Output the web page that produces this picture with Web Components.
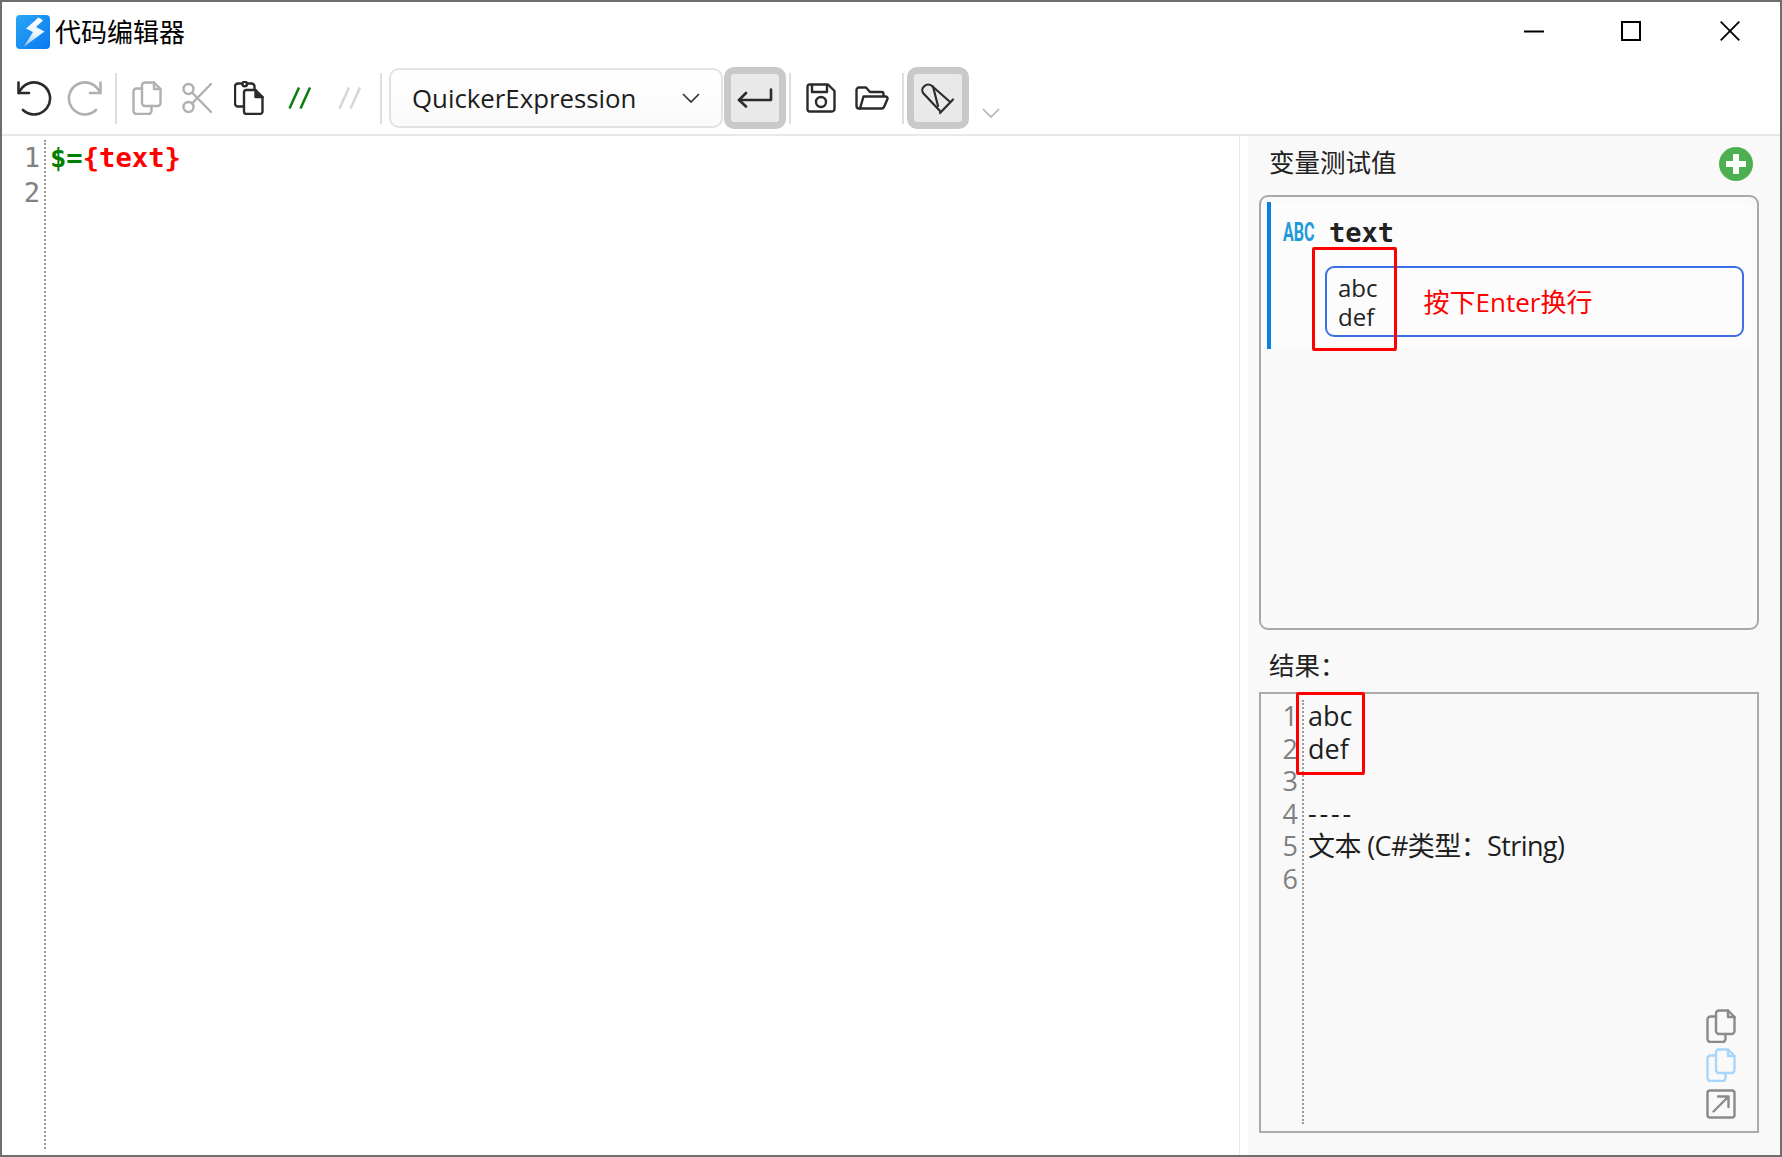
<!DOCTYPE html>
<html lang="zh">
<head>
<meta charset="utf-8">
<title>代码编辑器</title>
<style>
  html, body { margin: 0; padding: 0; background: #fff; }
  body { font-family: "Open Sans", "Noto Sans CJK SC", sans-serif; }
</style>
</head>
<body>
<app-window>
  <title-bar slot="title">代码编辑器</title-bar>
  <tool-bar slot="tools"></tool-bar>
  <code-editor slot="editor"></code-editor>
  <var-panel slot="panel"></var-panel>
</app-window>

<script>
const UI_FONT = '"Open Sans", "Noto Sans CJK SC", sans-serif';
const MONO_FONT = '"DejaVu Sans Mono", "Noto Sans CJK SC", monospace';

const copyIcon = (color) => `
  <svg width="30" height="34" viewBox="0 0 30 34" fill="none" stroke="${color}" stroke-width="2.4" stroke-linejoin="round" stroke-linecap="round">
    <path d="M13 1.5h9l6.5 6.5v14a3 3 0 0 1-3 3h-12.500a3 3 0 0 1-3-3v-17.500a3 3 0 0 1 3-3z"/>
    <path d="M22 1.500v6.500h6.500"/>
    <path d="M10 7.500h-5.500a3 3 0 0 0-3 3v19.500a3 3 0 0 0 3 3h12a3 3 0 0 0 3-3v-5"/>
  </svg>`;

const ICONS = {
  undo: (c) => `<svg width="36" height="36" viewBox="0 0 36 36" fill="none" stroke="${c}" stroke-width="2.600" stroke-linecap="round" stroke-linejoin="round">
    <path d="M2.500 2.500v10.500h10.500"/><path d="M3 13A16 16 0 1 1 7 30"/></svg>`,
  redo: (c) => `<svg width="36" height="36" viewBox="0 0 36 36" fill="none" stroke="${c}" stroke-width="2.600" stroke-linecap="round" stroke-linejoin="round">
    <path d="M33.500 2.500v10.500h-10.500"/><path d="M33 13A16 16 0 1 0 29 30"/></svg>`,
  scissors: (c) => `<svg width="30" height="32" viewBox="0 0 30 32" fill="none" stroke="${c}" stroke-width="2.400" stroke-linecap="round">
    <circle cx="6.500" cy="7" r="5"/><circle cx="6.500" cy="25" r="5"/>
    <path d="M10 10.500L29 30M10 21.500L29 2"/></svg>`,
  paste: (c) => `<svg width="30" height="34" viewBox="0 0 30 34" fill="none" stroke="${c}" stroke-width="2.400" stroke-linecap="round" stroke-linejoin="round">
    <path d="M9 25.500h-5a3 3 0 0 1-3-3v-17a3 3 0 0 1 3-3h3.500M14 2.500h3.500a3 3 0 0 1 3 3v2"/>
    <circle cx="10.700" cy="3" r="2.300"/>
    <path d="M12.500 9h9l7 7v14.500a2.500 2.500 0 0 1-2.500 2.500h-13.500a2.500 2.500 0 0 1-2.500-2.500v-19a2.500 2.500 0 0 1 2.500-2.500z"/>
    <path d="M21.500 9v7h7" fill="${c}"/></svg>`,
  slashes: (c) => `<svg width="24" height="24" viewBox="0 0 24 24" fill="none" stroke="${c}" stroke-width="2.500">
    <path d="M1.500 22.500L11 1.500M12.500 22.500L22 1.500"/></svg>`,
  enter: (c) => `<svg width="36" height="20" viewBox="0 0 36 20" fill="none" stroke="${c}" stroke-width="2.600" stroke-linecap="round" stroke-linejoin="round">
    <path d="M34 1.500v10.500h-32"/><path d="M9 5l-7 7 7 6.500"/></svg>`,
  save: (c) => `<svg width="30" height="30" viewBox="0 0 30 30" fill="none" stroke="${c}" stroke-width="2.400" stroke-linejoin="round">
    <path d="M3.500 1.500h18.500l6.500 6.500v18a2.500 2.500 0 0 1-2.500 2.500h-22.500a2 2 0 0 1-2-2v-23a2 2 0 0 1 2-2z"/>
    <path d="M6 1.500v7.500h15v-7.500"/><circle cx="15" cy="19" r="5"/></svg>`,
  open: (c) => `<svg width="34" height="24" viewBox="0 0 34 24" fill="none" stroke="${c}" stroke-width="2.400" stroke-linejoin="round" stroke-linecap="round">
    <path d="M5 22.500h-1a2.500 2.500 0 0 1-2.500-2.500v-16a2.500 2.500 0 0 1 2.500-2.500h7l4 4.500h11.500a2 2 0 0 1 2 2v2"/>
    <path d="M8.500 10.500h22a2 2 0 0 1 2 2.500l-3.500 8a2.500 2.500 0 0 1-2.300 1.500h-21.700z"/></svg>`,
  marker: (c) => `<svg width="34" height="34" viewBox="0 0 34 34" fill="none" stroke="${c}" stroke-width="2.200" stroke-linejoin="round" stroke-linecap="round">
    <path d="M19 30L2.500 12.500a5 5 0 0 1 .5-7 5.500 5.500 0 0 1 8-.5L28 20"/>
    <path d="M12 5.500l5 19.500M32 18.500L19 32"/></svg>`,
  chevron: (c) => `<svg width="18" height="10" viewBox="0 0 18 10" fill="none" stroke="${c}" stroke-width="1.700"><path d="M1 1l8 8 8-8"/></svg>`,
  external: (c) => `<svg width="30" height="30" viewBox="0 0 30 30" fill="none" stroke="${c}" stroke-width="2.400" stroke-linecap="round" stroke-linejoin="round">
    <rect x="1.500" y="1.500" width="27" height="27" rx="2.500"/><path d="M7.500 22.500L22 8M12 7.500h10.500v10.500"/></svg>`
};

class AppWindow extends HTMLElement {
  constructor() {
    super();
    this.attachShadow({ mode: "open" }).innerHTML = `
      <style>
        :host {
          display: flex;
          flex-direction: column;
          box-sizing: border-box;
          width: 1782px;
          height: 1157px;
          border: 2px solid #6e6e6e;
          background: #fff;
          overflow: hidden;
        }
        .main { flex: 1; display: flex; min-height: 0; }
      </style>
      <slot name="title"></slot>
      <slot name="tools"></slot>
      <div class="main">
        <slot name="editor"></slot>
        <slot name="panel"></slot>
      </div>
    `;
  }
}
customElements.define("app-window", AppWindow);

class TitleBar extends HTMLElement {
  constructor() {
    super();
    this.attachShadow({ mode: "open" }).innerHTML = `
      <style>
        :host {
          display: flex;
          align-items: center;
          height: 58px;
          padding-left: 14px;
          font: 26px ${UI_FONT};
          color: #000;
        }
        .logo { width: 34px; height: 34px; margin-right: 5px; margin-top: 1px; }
        .title { flex: 1; line-height: 34px; margin-top: 2px; }
        .caption { display: flex; align-items: center; }
        .caption span { display: flex; justify-content: center; align-items: center; }
      </style>
      <svg class="logo" viewBox="0 0 34 34">
        <defs>
          <linearGradient id="lg" x1="0" y1="0" x2="1" y2="1">
            <stop offset="0" stop-color="#2aa6f5"/><stop offset="1" stop-color="#0a78f0"/>
          </linearGradient>
          <linearGradient id="bolt" x1="0.600" y1="0" x2="0.300" y2="1">
            <stop offset="0" stop-color="#fff"/><stop offset=".55" stop-color="#e8f5fe"/><stop offset="1" stop-color="#8fcbf8"/>
          </linearGradient>
        </defs>
        <rect width="34" height="34" rx="4" fill="url(#lg)"/>
        <path d="M20.500 2Q22 2 21.500 3.500L10 13.500l7 3.500L7.500 32l21-15.500-8.500-4.500 7-6.500Q25 3 20.500 2z" fill="url(#bolt)"/>
      </svg>
      <div class="title"><slot></slot></div>
      <div class="caption">
        <span style="width:20px;height:20px;margin-right:77px">
          <svg width="20" height="20" viewBox="0 0 20 20"><path d="M0 10.500h20" stroke="#000" stroke-width="2"/></svg>
        </span>
        <span style="width:20px;height:20px;margin-right:79px">
          <svg width="20" height="20" viewBox="0 0 20 20"><rect x="1" y="1" width="18" height="18" fill="none" stroke="#000" stroke-width="2"/></svg>
        </span>
        <span style="width:20px;height:20px;margin-right:40px">
          <svg width="20" height="20" viewBox="0 0 20 20"><path d="M.7.700l18.600 18.600M19.300.700L.7 19.300" stroke="#000" stroke-width="1.800"/></svg>
        </span>
      </div>
    `;
  }
}
customElements.define("title-bar", TitleBar);

class ToolBtn extends HTMLElement {
  connectedCallback() {
    if (this.shadowRoot) return;
    const icon = this.getAttribute("icon");
    const color = this.getAttribute("color") || "#2b2b2b";
    const art = icon === "copy" ? copyIcon(color) : ICONS[icon](color);
    this.attachShadow({ mode: "open" }).innerHTML = `
      <style>
        :host { display: flex; align-items: center; justify-content: center; flex: none; }
        svg { display: block; }
      </style>
      ${art}
    `;
  }
}
customElements.define("tool-btn", ToolBtn);

class ToolSep extends HTMLElement {
  constructor() {
    super();
    this.attachShadow({ mode: "open" }).innerHTML = `
      <style>
        :host { display: block; flex: none; width: 2px; height: 51px; background: #dedede; }
      </style>
    `;
  }
}
customElements.define("tool-sep", ToolSep);

class ToggleBtn extends HTMLElement {
  constructor() {
    super();
    this.attachShadow({ mode: "open" }).innerHTML = `
      <style>
        :host {
          display: flex;
          align-items: center;
          justify-content: center;
          flex: none;
          box-sizing: border-box;
          width: 62px;
          height: 62px;
          border: 7px solid #c9c9c9;
          border-radius: 10px;
          background: #e9e9e9;
        }
      </style>
      <slot></slot>
    `;
  }
}
customElements.define("toggle-btn", ToggleBtn);

class ComboBox extends HTMLElement {
  constructor() {
    super();
    this.attachShadow({ mode: "open" }).innerHTML = `
      <style>
        :host {
          display: flex;
          align-items: center;
          flex: none;
          box-sizing: border-box;
          width: 334px;
          height: 60px;
          padding: 0 21px 0 21px;
          border: 2px solid #e2e2e2;
          border-radius: 10px;
          background: linear-gradient(#fff, #fafafa);
          font: 25.800px ${UI_FONT};
          color: #1c1c1c;
        }
        .value { flex: 1; }
      </style>
      <div class="value"><slot></slot></div>
      ${ICONS.chevron("#333")}
    `;
  }
}
customElements.define("combo-box", ComboBox);

class ToolBar extends HTMLElement {
  constructor() {
    super();
    this.attachShadow({ mode: "open" }).innerHTML = `
      <style>
        :host {
          display: flex;
          align-items: center;
          box-sizing: border-box;
          height: 76px;
          padding: 2px 0 0 14px;
          border-bottom: 2px solid #e8e8e8;
        }
        .low { align-self: flex-end; margin-bottom: 16px; }
      </style>
      <tool-btn icon="undo"></tool-btn>
      <tool-btn icon="redo" color="#b0b0b0" style="margin-left:15px"></tool-btn>
      <tool-sep style="margin-left:12px"></tool-sep>
      <tool-btn icon="copy" color="#b0b0b0" style="margin-left:15px"></tool-btn>
      <tool-btn icon="scissors" color="#b0b0b0" style="margin-left:20px"></tool-btn>
      <tool-btn icon="paste" style="margin-left:22px"></tool-btn>
      <tool-btn icon="slashes" color="#0a7d0a" style="margin-left:24px"></tool-btn>
      <tool-btn icon="slashes" color="#d6d6d6" style="margin-left:26px"></tool-btn>
      <tool-sep style="margin-left:18px"></tool-sep>
      <combo-box style="margin-left:7px">QuickerExpression</combo-box>
      <toggle-btn style="margin-left:1px"><tool-btn icon="enter"></tool-btn></toggle-btn>
      <tool-sep style="margin-left:3px"></tool-sep>
      <tool-btn icon="save" style="margin-left:15px"></tool-btn>
      <tool-btn icon="open" style="margin-left:19px"></tool-btn>
      <tool-sep style="margin-left:13px"></tool-sep>
      <toggle-btn style="margin-left:3px"><tool-btn icon="marker"></tool-btn></toggle-btn>
      <tool-btn class="low" icon="chevron" color="#b4b4b4" style="margin-left:13px"></tool-btn>
    `;
  }
}
customElements.define("tool-bar", ToolBar);

class CodeEditor extends HTMLElement {
  constructor() {
    super();
    this.attachShadow({ mode: "open" }).innerHTML = `
      <style>
        :host {
          display: flex;
          flex: none;
          box-sizing: border-box;
          width: 1238px;
          padding-top: 4px;
          border-right: 1px solid #e8e8e8;
          font: bold 27.200px/35px ${MONO_FONT};
        }
        .gutter {
          box-sizing: border-box;
          width: 44px;
          margin-bottom: 6px;
          padding-right: 4px;
          border-right: 2px dotted #9a9a9a;
          text-align: right;
          color: #808080;
          font-weight: normal;
        }
        .code { padding-left: 4px; white-space: pre; }
        .g { color: #008000; }
        .r { color: #ff0000; }
      </style>
      <div class="gutter"><div>1</div><div>2</div></div>
      <div class="code"><span class="g">$=</span><span class="r">{text}</span></div>
    `;
  }
}
customElements.define("code-editor", CodeEditor);

class RedMark extends HTMLElement {
  constructor() {
    super();
    this.attachShadow({ mode: "open" }).innerHTML = `
      <style>
        :host {
          display: block;
          position: absolute;
          box-sizing: border-box;
          border: 3px solid #ff0000;
          border-radius: 2px;
          pointer-events: none;
        }
      </style>
    `;
  }
}
customElements.define("red-mark", RedMark);

class VarItem extends HTMLElement {
  constructor() {
    super();
    this.attachShadow({ mode: "open" }).innerHTML = `
      <style>
        :host {
          display: block;
          position: relative;
          box-sizing: border-box;
          height: 147px;
          border-left: 4px solid #0a80e0;
          background: #fcfcfc;
        }
        .head { display: flex; align-items: center; height: 62px; padding: 0 0 2px 12px; box-sizing: border-box; }
        .type {
          width: 46px;
          font: bold 26px Roboto, sans-serif;
          color: #1f9ad8;
          transform: scaleX(.62);
          transform-origin: left center;
          white-space: nowrap;
        }
        .name { font: bold 27px ${MONO_FONT}; color: #222; }
        .input {
          display: flex;
          align-items: center;
          box-sizing: border-box;
          height: 71px;
          margin: 2px 7px 0 54px;
          padding-left: 11px;
          border: 2px solid #3a6fe8;
          border-radius: 9px;
          font: 24px/29px ${UI_FONT};
          color: #222;
        }
        .hint { margin-left: 46px; font-size: 26px; line-height: 34px; color: #ff0000; }
        red-mark { left: 41px; top: 45px; width: 85px; height: 104px; }
      </style>
      <div class="head"><span class="type">ABC</span><span class="name">text</span></div>
      <div class="input"><div>abc<br>def</div><div class="hint">按下Enter换行</div></div>
      <red-mark></red-mark>
    `;
  }
}
customElements.define("var-item", VarItem);

class ResultView extends HTMLElement {
  constructor() {
    super();
    const lines = [
      "abc",
      "def",
      "",
      '<span style="letter-spacing:2.800px;position:relative;top:-1px">----</span>',
      '<span style="letter-spacing:-.6px">文本 (C#类型：String)</span>',
      ""
    ];
    this.attachShadow({ mode: "open" }).innerHTML = `
      <style>
        :host {
          display: flex;
          position: relative;
          box-sizing: border-box;
          height: 441px;
          padding-top: 6px;
          border: 2.500px solid #ababab;
          font: 27px/32.600px ${UI_FONT};
          color: #1e1e1e;
        }
        .gutter {
          box-sizing: border-box;
          width: 43px;
          margin-bottom: 7px;
          padding-right: 4px;
          border-right: 2px dotted #9a9a9a;
          text-align: right;
          color: #808080;
        }
        .lines { padding-left: 4px; white-space: pre; }
        .lines div { height: 32.600px; }
        .actions {
          position: absolute;
          right: 21px;
          bottom: 12px;
          display: flex;
          flex-direction: column;
          gap: 5px;
        }
        .actions svg { display: block; }
        red-mark { left: 35px; top: -2px; width: 69px; height: 83px; }
      </style>
      <div class="gutter">${lines.map((_, i) => `<div>${i + 1}</div>`).join("")}</div>
      <div class="lines">${lines.map((l) => `<div>${l}</div>`).join("")}</div>
      <div class="actions">
        ${copyIcon("#8a8a8a")}
        ${copyIcon("#a9d5fb")}
        <div style="margin-top:2px">${ICONS.external("#8a8a8a")}</div>
      </div>
      <red-mark></red-mark>
    `;
  }
}
customElements.define("result-view", ResultView);

class VarPanel extends HTMLElement {
  constructor() {
    super();
    this.attachShadow({ mode: "open" }).innerHTML = `
      <style>
        :host {
          display: flex;
          flex-direction: column;
          box-sizing: border-box;
          flex: 1;
          min-width: 0;
          margin-left: 8px;
          padding: 0 21px 0 11px;
          background: #f9f9f9;
          font: 25.500px ${UI_FONT};
          color: #222;
        }
        .head {
          display: flex;
          align-items: center;
          justify-content: space-between;
          height: 59px;
          padding: 0 6px 0 10px;
          box-sizing: border-box;
        }
        .head span { margin-top: -11px; }
        .head svg { margin-top: -4px; }
        .box {
          box-sizing: border-box;
          height: 435px;
          padding: 5px 6px;
          border: 2px solid #a8a8a8;
          border-radius: 9px;
        }
        .label { display: flex; align-items: center; height: 62px; padding: 5px 0 0 10px; box-sizing: border-box; }
      </style>
      <div class="head">
        <span>变量测试值</span>
        <svg width="34" height="34" viewBox="0 0 34 34">
          <circle cx="17" cy="17" r="17" fill="#4caf50"/>
          <path d="M17 7v20M7 17h20" stroke="#fff" stroke-width="6"/>
        </svg>
      </div>
      <div class="box"><var-item></var-item></div>
      <div class="label">结果：</div>
      <result-view></result-view>
    `;
  }
}
customElements.define("var-panel", VarPanel);
</script>
</body>
</html>
